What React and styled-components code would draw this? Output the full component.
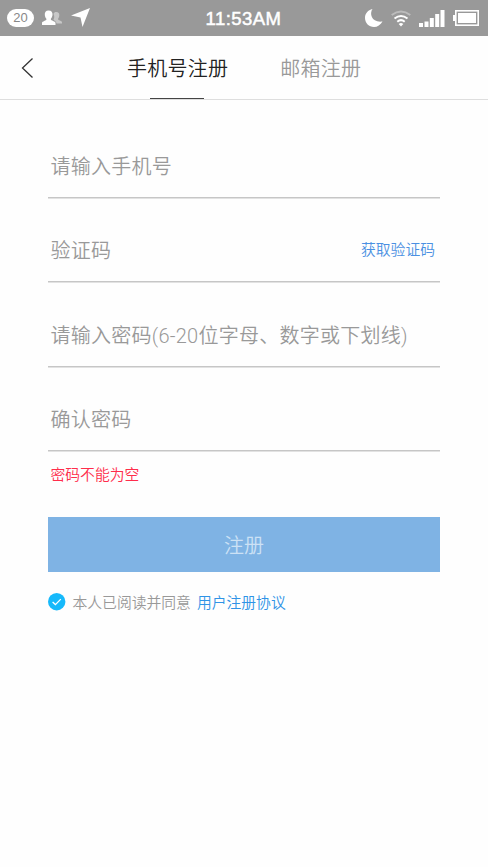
import React from 'react';
import styled, { createGlobalStyle } from 'styled-components';

const lineColor = '#c6c6c6';
const mutedColor = '#999';
const linkColor = '#2f93e6';

const GlobalStyle = createGlobalStyle`
  * {
    box-sizing: border-box;
  }

  body {
    margin: 0;
    background: #fefefe;
    font-family: Roboto, 'Noto Sans CJK SC', sans-serif;
    font-weight: 350;
    white-space: nowrap;
  }
`;

const Page = styled.div`
  min-height: 867px;
  overflow: hidden;
`;

const StatusBar = styled.div`
  display: grid;
  grid-template-columns: 1fr auto 1fr;
  align-items: center;
  height: 35.5px;
  padding: 0 9px 0 7px;
  background: ${mutedColor};
  color: #fff;
`;

const StatusGroup = styled.div`
  display: flex;
  align-items: center;
  justify-content: ${props => (props.$end ? 'flex-end' : 'flex-start')};
`;

const CountBadge = styled.span`
  width: 27px;
  height: 18px;
  margin-right: 8px;
  border-radius: 9px;
  background: #fff;
  color: #888;
  font: 400 13px/18px 'Liberation Sans', sans-serif;
  text-align: center;
`;

const Clock = styled.span`
  padding: 2px 0 0 1px;
  font: 400 18.5px/34px 'Liberation Sans', sans-serif;
  letter-spacing: 0.45px;
  -webkit-text-stroke: 0.5px #fff;
`;

const Header = styled.header`
  display: flex;
  align-items: stretch;
  height: 64px;
  border-bottom: 1px solid #dedede;
`;

const BackButton = styled.button`
  width: 127px;
  padding: 4px 0 0 21px;
  border: none;
  background: none;
  text-align: left;
`;

const Tab = styled.button`
  display: flex;
  flex-direction: column;
  align-items: center;
  justify-content: space-between;
  margin-right: 52px;
  padding: 18px 0 0;
  border: none;
  background: none;
  color: ${props => (props.$active ? '#222' : mutedColor)};
  font: inherit;
  font-size: 20px;
  line-height: 30px;
  letter-spacing: 0.25px;

  &::after {
    content: '';
    width: 54px;
    height: 1.5px;
    margin: 0 1px -0.5px 0;
    background: ${props => (props.$active ? '#444' : 'transparent')};
  }
`;

const Form = styled.form`
  padding: 14px 48px 0;
`;

const Field = styled.label`
  display: flex;
  align-items: flex-end;
  justify-content: space-between;
  height: 84.4px;
  padding: 0 5px 15px 2.5px;
  border-bottom: 1px solid ${lineColor};
  box-shadow: 0 1px 0 #e2e2e2;
`;

const Hint = styled.span`
  color: ${mutedColor};
  font-size: 20px;
  line-height: 30px;
  letter-spacing: 0.25px;
`;

const CodeLink = styled.span`
  color: #4a90e2;
  font-size: 14.8px;
  line-height: 32px;
`;

const ErrorText = styled.div`
  padding: 12px 2.5px 0;
  color: #ff2d4b;
  font-size: 14.8px;
  line-height: 24px;
`;

const SubmitButton = styled.button`
  display: block;
  width: 100%;
  height: 54.5px;
  margin-top: 30px;
  padding: 0;
  border: none;
  background: #7fb3e4;
  color: #cce1f5;
  font: inherit;
  font-size: 20px;
`;

const Agreement = styled.div`
  display: flex;
  align-items: center;
  margin-top: 17.5px;
  color: ${mutedColor};
  font-size: 14.8px;
  line-height: 24px;
`;

const AgreementText = styled.span`
  margin: 2px 6px 0 6.5px;
`;

const AgreementLink = styled.a`
  margin-top: 2px;
  color: ${linkColor};
`;

const PeopleIcon = () =>
  <svg width="21" height="16" viewBox="0 0 21 16">
    <path d="M11.500 4C12 2.500 13 2 14.200 2C16.500 2 17.500 3.500 17.300 5.500C17.200 7 16.500 8 16 9C16 10.500 20 10.500 20 12.500V13.500H14.500C14.500 11 11.500 10.500 11.500 9.500C12.500 8 12.500 6 11.500 4z" fill="#c7c7c7" />
    <path d="M6.500.5C9.500.5 10.800 2.500 10.500 5C10.300 7 9.300 8 8.800 9C8.800 11 13.500 11 13.500 13V15H0V13C0 11 4.500 11 4.500 9C3.800 8 3 7 2.800 5C2.500 2.500 3.800.5 6.500.5z" fill="#fff" />
  </svg>
;

const LocationIcon = () =>
  <svg width="27" height="20" viewBox="-8 0 27 20">
    <path d="M19 0L11.500 19L9.500 9.500L0 7.500z" fill="#fff" />
  </svg>
;

const MoonIcon = () =>
  <svg width="18" height="18" viewBox="0 0 18 18">
    <path d="M7.500 0C4 5 7 14 17.500 12.500C15.500 16 12.500 18 9 18C4 18 0 14 0 9C0 4.500 3 1 7.500 0z" fill="#fff" />
  </svg>
;

const WifiIcon = () =>
  <svg width="20" height="17" viewBox="0 0 20 17">
    <g fill="none" stroke="#fff" strokeWidth="2">
      <path d="M.7 5Q10-2 19.300 5" opacity=".35" />
      <path d="M3.500 8.500Q10 3.500 16.500 8.500" />
      <path d="M6.300 11.700Q10 8.500 13.700 11.700" />
    </g>
    <path d="M7.700 14Q10 12 12.300 14L10 16.500z" fill="#fff" />
  </svg>
;

const SignalIcon = () =>
  <svg width="26" height="17" viewBox="0 0 26 17" fill="#fff">
    <rect x="0" y="13" width="4" height="4" />
    <rect x="5.500" y="11.500" width="4" height="5.500" />
    <rect x="10.800" y="8" width="4" height="9" />
    <rect x="16.200" y="4" width="4" height="13" />
    <rect x="21.500" y="0" width="4" height="17" />
  </svg>
;

const BatteryIcon = () =>
  <svg width="26" height="16" viewBox="0 0 26 16">
    <rect x="2.800" y=".8" width="22.400" height="14.400" fill="none" stroke="#fff" strokeWidth="1.600" />
    <rect x="5" y="3" width="18" height="10" fill="#fff" />
    <rect x="0" y="5" width="2.500" height="6" fill="#fff" />
  </svg>
;

const StatusIcons = styled(StatusGroup)`
  gap: 8px;
`;

const BackIcon = () =>
  <svg width="13" height="20" viewBox="0 0 13 20">
    <path d="M11.500.5L1.500 10L11.500 19.500" fill="none" stroke="#333" strokeWidth="1.300" />
  </svg>
;

const CheckIcon = () =>
  <svg width="18" height="18" viewBox="0 0 18 18">
    <circle cx="8.700" cy="8.700" r="8.700" fill="#16b9fb" />
    <path d="M4.600 9L7.400 11.600L12.800 6.100" fill="none" stroke="#fff" strokeWidth="1.300" />
  </svg>
;

const fields = [
  { id: 'phone', hint: '请输入手机号' },
  { id: 'code', hint: '验证码', action: '获取验证码' },
  { id: 'password', hint: '请输入密码(6-20位字母、数字或下划线)' },
  { id: 'confirm', hint: '确认密码' },
];

const App = () =>
  <Page>
    <GlobalStyle />
    <StatusBar>
      <StatusGroup>
        <CountBadge>20</CountBadge>
        <PeopleIcon />
        <LocationIcon />
      </StatusGroup>
      <Clock>11:53AM</Clock>
      <StatusIcons $end>
        <MoonIcon />
        <WifiIcon />
        <SignalIcon />
        <BatteryIcon />
      </StatusIcons>
    </StatusBar>
    <Header>
      <BackButton><BackIcon /></BackButton>
      <Tab $active>手机号注册</Tab>
      <Tab>邮箱注册</Tab>
    </Header>
    <Form>
      {fields.map(field =>
        <Field key={field.id}>
          <Hint>{field.hint}</Hint>
          {field.action ? <CodeLink>{field.action}</CodeLink> : null}
        </Field>
      )}
      <ErrorText>密码不能为空</ErrorText>
      <SubmitButton type="button">注册</SubmitButton>
      <Agreement>
        <CheckIcon />
        <AgreementText>本人已阅读并同意</AgreementText>
        <AgreementLink>用户注册协议</AgreementLink>
      </Agreement>
    </Form>
  </Page>
;

export default App;
